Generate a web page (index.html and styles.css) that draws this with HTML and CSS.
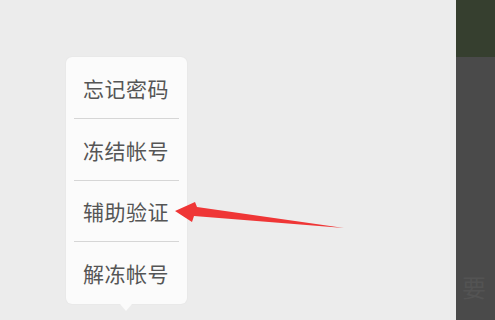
FILE: index.html
```html
<!DOCTYPE html>
<html>
<head>
<meta charset="utf-8">
<link rel="stylesheet" href="styles.css">
</head>
<body>
<div class="page">
  <div class="main">
    <div class="menu">
      <div class="item first">忘记密码</div>
      <div class="divider"></div>
      <div class="item second">冻结帐号</div>
      <div class="divider"></div>
      <div class="item third">辅助验证</div>
      <div class="divider"></div>
      <div class="item last">解冻帐号</div>
      <div class="pointer"></div>
    </div>
    <svg class="arrow" width="495" height="320" viewBox="0 0 495 320">
      <polygon points="175,211 195,202 197,207 344,228 194,216 192,222" fill="#ef3636"/>
    </svg>
  </div>
  <div class="side">
    <div class="side-top"></div>
    <div class="side-body">
      <div class="side-text">要</div>
    </div>
  </div>
</div>
</body>
</html>
```
FILE: styles.css
```css
html, body {
  margin: 0;
  padding: 0;
}
body {
  width: 495px;
  height: 320px;
  overflow: hidden;
  background: #ececec;
  font-family: "Noto Sans CJK SC", "Noto Sans", sans-serif;
}
.page {
  display: flex;
  width: 495px;
  height: 320px;
}
.main {
  width: 456px;
  height: 320px;
  position: relative;
}
.menu {
  position: relative;
  margin-left: 66px;
  margin-top: 57px;
  width: 121px;
  height: 247px;
  background: #fbfbfb;
  border-radius: 6px;
  box-shadow: 0 0 2px rgba(0,0,0,0.06);
  display: flex;
  flex-direction: column;
}
.item {
  display: flex;
  align-items: center;
  padding-left: 17px;
  font-size: 21px;
  color: #555555;
  letter-spacing: 0.5px;
  box-sizing: border-box;
}
.first { height: 61px; }
.second { height: 61px; }
.third { height: 60px; }
.last { height: 62px; }
.divider {
  height: 1px;
  margin: 0 8px;
  background: #d6d6d6;
}
.pointer {
  position: absolute;
  left: 54px;
  bottom: -7px;
  width: 0;
  height: 0;
  border-left: 6px solid transparent;
  border-right: 6px solid transparent;
  border-top: 7px solid #fbfbfb;
}
.arrow {
  position: absolute;
  left: 0;
  top: 0;
}
.side {
  width: 39px;
  height: 320px;
  display: flex;
  flex-direction: column;
}
.side-top {
  height: 57px;
  background: #363f2f;
}
.side-body {
  flex: 1;
  background: #4a4a4a;
  padding-top: 216px;
  padding-left: 6px;
  box-sizing: border-box;
}
.side-text {
  font-size: 24px;
  color: #535353;
  line-height: 28px;
}
```
